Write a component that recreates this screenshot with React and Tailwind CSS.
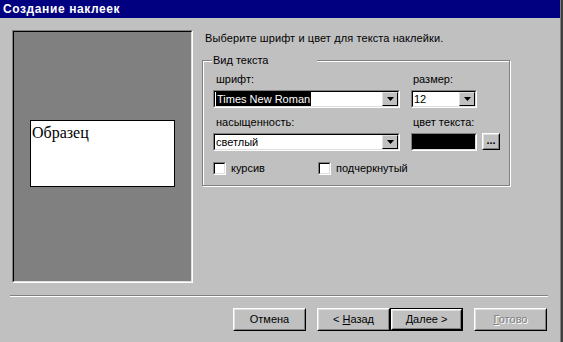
const sans = { fontFamily: '"Liberation Sans", Arial, sans-serif' };

function DropArrow() {
  return (
    <div className="w-[16px] h-full bg-[#c0c0c0] border border-t-[#dfdfdf] border-l-[#dfdfdf] border-r-black border-b-black flex items-center justify-center">
      <svg width="7" height="4" viewBox="0 0 7 4">
        <path d="M0 0h7L3.5 4z" fill="#000" />
      </svg>
    </div>
  );
}

function Sunken({ className, children }) {
  return (
    <div className={"border border-t-[#808080] border-l-[#808080] border-r-white border-b-white " + className}>
      <div className="h-full w-full border border-t-black border-l-black border-r-[#dfdfdf] border-b-[#dfdfdf] flex">
        {children}
      </div>
    </div>
  );
}

function Combo({ width, children }) {
  return (
    <Sunken className={"h-[18px] " + width}>
      <div className="flex-1 bg-white flex items-center text-[11px] leading-none text-black overflow-hidden">
        {children}
      </div>
      <DropArrow />
    </Sunken>
  );
}

function Check({ label }) {
  return (
    <div className="flex items-center">
      <Sunken className="w-[13px] h-[13px]">
        <div className="flex-1 bg-white" />
      </Sunken>
      <span className="ml-[5px] text-[11px] leading-[13px]">{label}</span>
    </div>
  );
}

function Button({ children, isDefault, disabled }) {
  return (
    <div className={"w-[73px] h-[23px] " + (isDefault ? "border border-black" : "")}>
      <div className="w-full h-full border border-t-white border-l-white border-r-black border-b-black">
        <div className="w-full h-full border border-t-[#dfdfdf] border-l-[#dfdfdf] border-r-[#808080] border-b-[#808080] flex items-center justify-center">
          <span
            className={
              "text-[11px] leading-none " +
              (disabled ? "text-[#808080] [text-shadow:1px_1px_0_#fff]" : "text-black")
            }
          >
            {children}
          </span>
        </div>
      </div>
    </div>
  );
}

export default function App() {
  return (
    <div className="w-[563px] h-[342px] bg-[#c0c0c0] overflow-hidden flex" style={sans}>
      <div className="w-[560px] flex flex-col">
        <div className="h-[18px] bg-[#000080] flex items-center pl-[3px]">
          <span className="text-white font-bold text-[12px] leading-none tracking-[0.6px]">Создание наклеек</span>
        </div>

        <div className="flex pt-[12px] pl-[12px]">
          <div className="w-[181px] h-[253px] border border-t-[#808080] border-l-[#808080] border-r-white border-b-white">
            <div className="w-full h-full border border-t-black border-l-black border-r-[#dfdfdf] border-b-[#dfdfdf] bg-[#808080] pt-[88px] pl-[16px]">
              <div className="w-[145px] h-[67px] bg-white border border-black px-[1px]">
                <span
                  className="text-[16px] leading-[18px] text-black"
                  style={{ fontFamily: '"Liberation Serif", "Times New Roman", serif' }}
                >
                  Образец
                </span>
              </div>
            </div>
          </div>

          <div className="ml-[9px] pt-[2px] flex flex-col">
            <p className="pl-[3px] text-[11px] leading-[13px] text-black tracking-[0.1px]">
              Выберите шрифт и цвет для текста наклейки.
            </p>

            <div className="relative mt-[15px] w-[308px] h-[126px] border border-[#808080] shadow-[inset_1px_1px_0_#fff,1px_1px_0_#fff] pl-[10px] pt-[12px]">
              <div className="absolute -top-[8px] left-[9px] w-[105px] h-[14px] bg-[#c0c0c0] flex items-center">
                <span className="pl-[1px] text-[11px] leading-none text-black">Вид текста</span>
              </div>

              <div className="flex">
                <div className="w-[187px] flex flex-col">
                  <span className="pl-[3px] text-[11px] leading-[13px]">шрифт:</span>
                  <div className="mt-[4px]">
                    <Combo width="w-[187px]">
                      <span className="ml-[1px] bg-black text-white px-[1px] py-[2px]">Times New Roman</span>
                    </Combo>
                  </div>
                </div>
                <div className="ml-[11px] flex flex-col">
                  <span className="pl-[2px] text-[11px] leading-[13px]">размер:</span>
                  <div className="mt-[4px]">
                    <Combo width="w-[66px]">
                      <span className="ml-[1px]">12</span>
                    </Combo>
                  </div>
                </div>
              </div>

              <div className="flex mt-[8px]">
                <div className="w-[187px] flex flex-col">
                  <span className="pl-[3px] text-[11px] leading-[13px]">насыщенность:</span>
                  <div className="mt-[4px]">
                    <Combo width="w-[187px]">
                      <span className="ml-[1px]">светлый</span>
                    </Combo>
                  </div>
                </div>
                <div className="ml-[11px] flex flex-col">
                  <span className="pl-[2px] text-[11px] leading-[13px]">цвет текста:</span>
                  <div className="mt-[4px] flex">
                    <Sunken className="w-[66px] h-[18px]">
                      <div className="flex-1 bg-black" />
                    </Sunken>
                    <div className="ml-[5px] w-[18px] h-[17px] border border-t-white border-l-white border-r-black border-b-black">
                      <div className="w-full h-full border border-t-[#dfdfdf] border-l-[#dfdfdf] border-r-[#808080] border-b-[#808080] flex items-center justify-center">
                        <span className="text-[11px] font-bold leading-none -mt-[3px]">...</span>
                      </div>
                    </div>
                  </div>
                </div>
              </div>

              <div className="flex mt-[11px]">
                <div className="w-[105px]">
                  <Check label="курсив" />
                </div>
                <Check label="подчеркнутый" />
              </div>
            </div>
          </div>
        </div>

        <div className="mt-[12px] ml-[10px] w-[538px] border-t border-t-[#808080] border-b border-b-white" />

        <div className="flex mt-[11px] pl-[233px]">
          <Button>Отмена</Button>
          <div className="ml-[11px] flex">
            <Button>
              &lt; <span className="underline underline-offset-1">Н</span>азад
            </Button>
            <Button isDefault>
              <span className="underline underline-offset-1">Д</span>алее &gt;
            </Button>
          </div>
          <div className="ml-[11px]">
            <Button disabled>
              <span className="underline underline-offset-1">Г</span>отово
            </Button>
          </div>
        </div>
      </div>
      <div className="w-[1px] h-full bg-[#808080]" />
      <div className="w-[2px] h-full bg-[#404040]" />
    </div>
  );
}
